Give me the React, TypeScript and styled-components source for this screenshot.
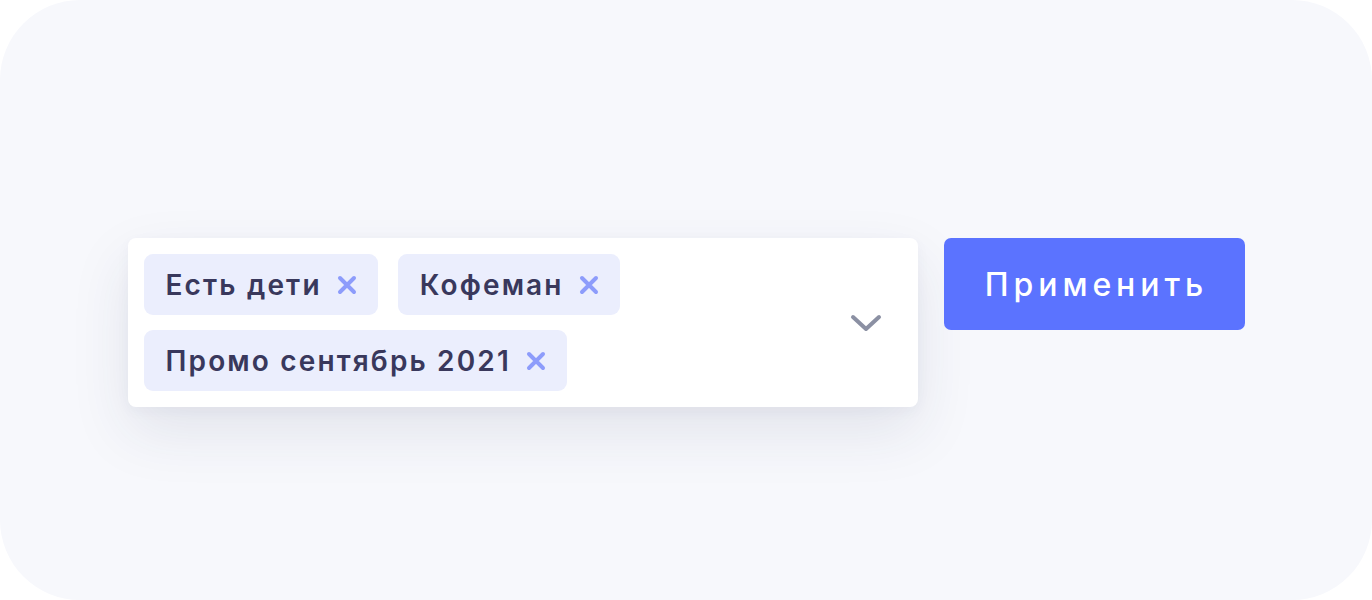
import React from "react";
import styled, { createGlobalStyle } from "styled-components";

const Global = createGlobalStyle`
  html, body { margin: 0; padding: 0; background: #ffffff; }
  body { font-family: "Inter", "Noto Sans", sans-serif; }
  * { box-sizing: border-box; }
`;

const Canvas = styled.div`
  width: 1372px;
  height: 600px;
  background: #f7f8fc;
  border-radius: 80px;
  display: flex;
  justify-content: center;
  align-items: flex-start;
  gap: 26px;
  padding-top: 238px;
`;

const Select = styled.div`
  width: 790px;
  background: #ffffff;
  border-radius: 8px;
  box-shadow: 0 24px 60px rgba(40, 48, 90, 0.1), 0 4px 14px rgba(40, 48, 90, 0.04);
  padding: 16px 36px 16px 16px;
  display: flex;
  align-items: center;
`;

const Tags = styled.div`
  width: 520px;
  display: flex;
  flex-wrap: wrap;
  gap: 15px 20px;
`;

const Tag = styled.div`
  height: 61px;
  display: flex;
  align-items: center;
  gap: 15px;
  padding: 0 21px 0 22px;
  background: #ebeefd;
  border-radius: 9px;
  font-family: "Inter", "Noto Sans", sans-serif;
  font-weight: 600;
  font-size: 28px;
  letter-spacing: 2.15px;
  color: #39385c;
`;

const Remove = styled.svg`
  width: 20px;
  height: 20px;
  flex: none;
`;

const Chevron = styled.svg`
  width: 32px;
  height: 18px;
  flex: none;
  margin-left: auto;
`;

const Button = styled.button`
  width: 301px;
  height: 92px;
  border: none;
  border-radius: 7px;
  background: #5b73ff;
  color: #ffffff;
  font-family: "Inter", "Noto Sans", sans-serif;
  font-weight: 500;
  font-size: 32px;
  letter-spacing: 4.9px;
  padding: 0 0 0 5px;
  cursor: pointer;
`;

const CloseIcon = () => (
  <Remove viewBox="0 0 20 20">
    <path d="M3 3 L17 17 M17 3 L3 17" stroke="#8d9cfb" strokeWidth="4" strokeLinecap="round" fill="none" />
  </Remove>
);

const tags = ["Есть дети", "Кофеман", "Промо сентябрь 2021"];

export default function App() {
  return (
    <>
      <Global />
      <Canvas>
        <Select>
          <Tags>
            {tags.map((t) => (
              <Tag key={t}>
                {t}
                <CloseIcon />
              </Tag>
            ))}
          </Tags>
          <Chevron viewBox="0 0 32 18">
            <path d="M3 3 L16 15 L29 3" stroke="#8b90a3" strokeWidth="4" strokeLinecap="round" strokeLinejoin="round" fill="none" />
          </Chevron>
        </Select>
        <Button>Применить</Button>
      </Canvas>
    </>
  );
}
